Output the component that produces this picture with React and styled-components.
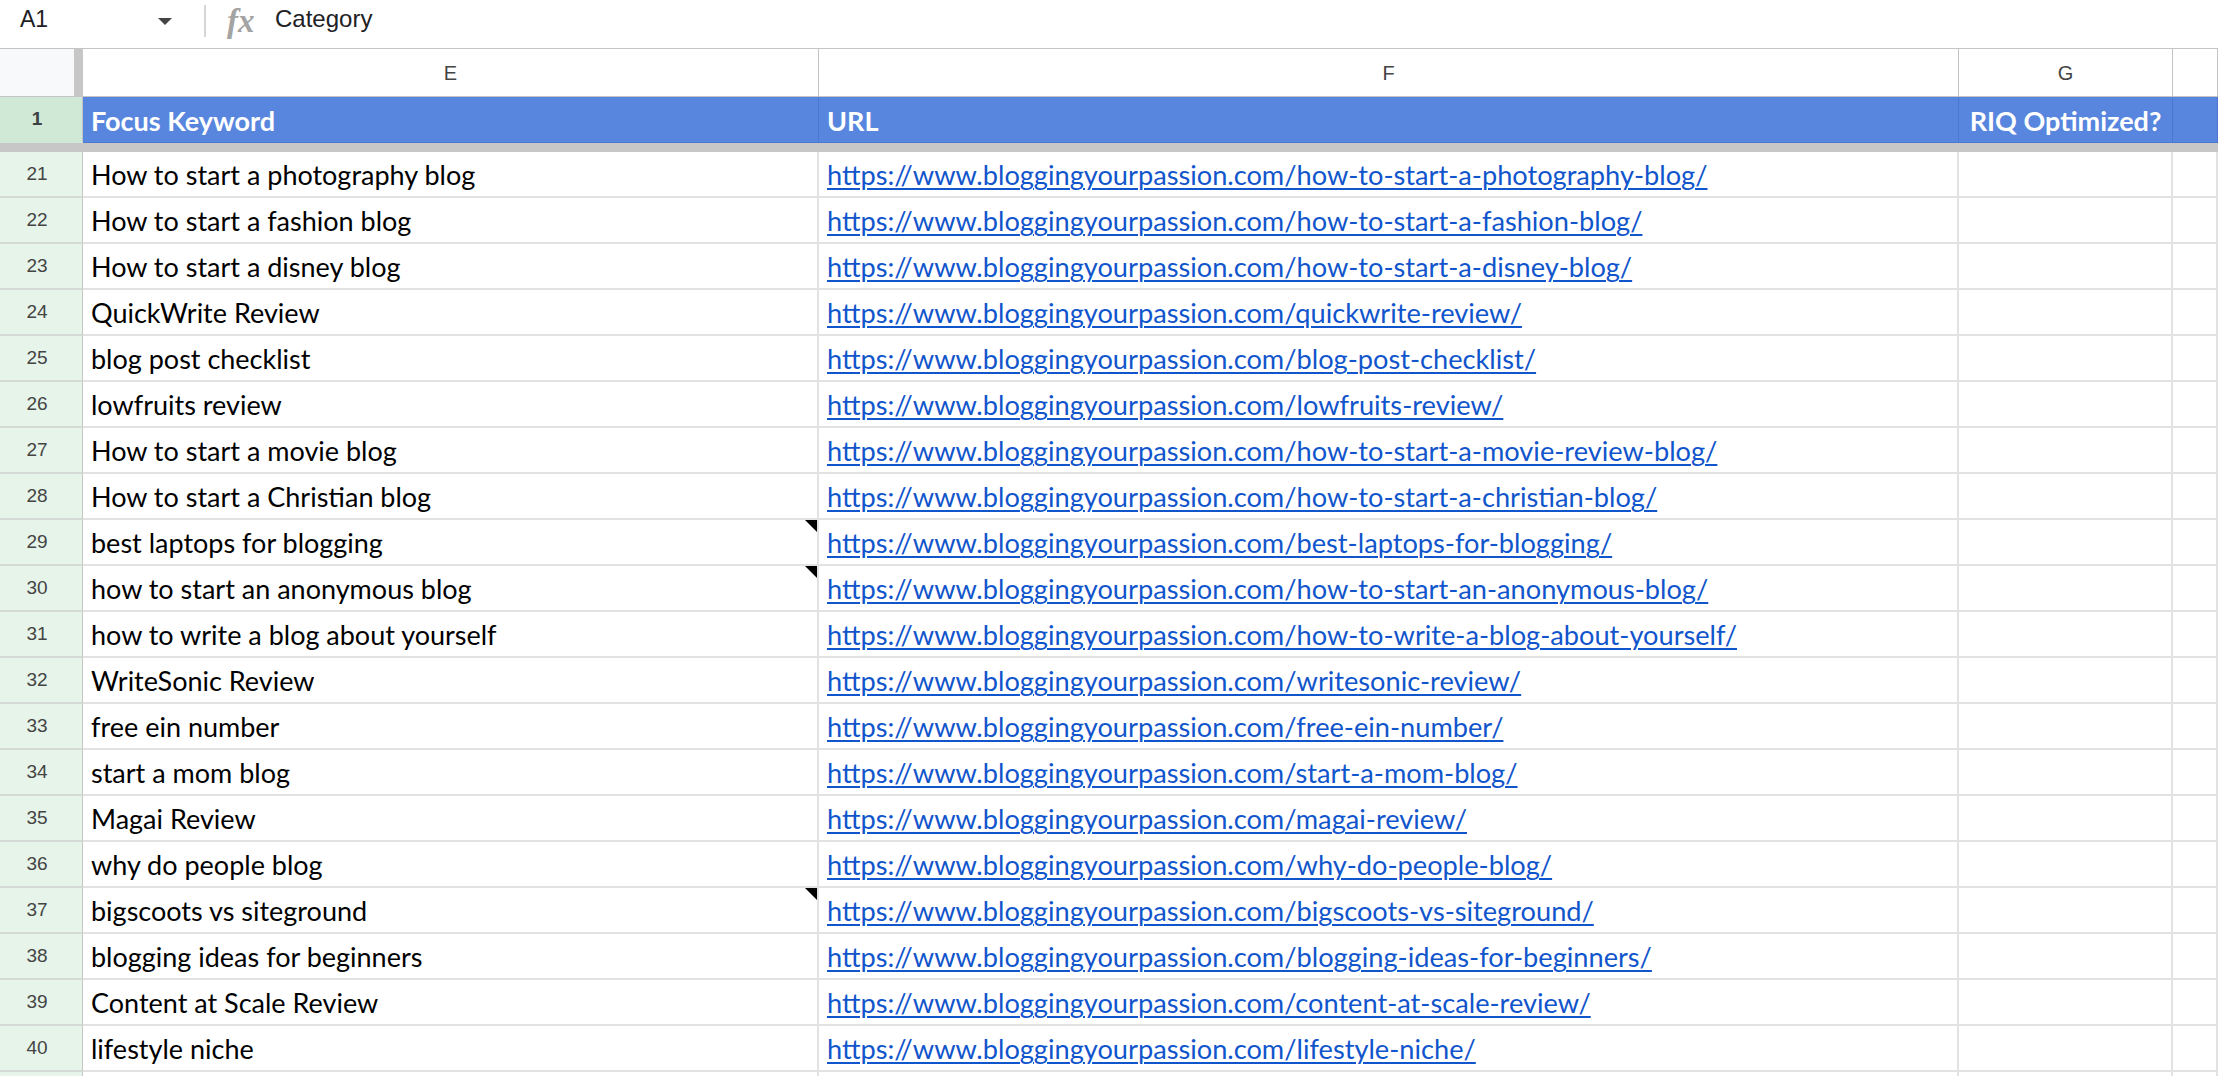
import React from 'react';
import styled, { createGlobalStyle } from 'styled-components';

const GlobalStyle = createGlobalStyle`
  html, body {
    margin: 0;
    padding: 0;
    background: #ffffff;
    overflow: hidden;
  }
  body {
    font-family: 'Liberation Sans', Arial, sans-serif;
  }
`;

const BASE = 'https://www.bloggingyourpassion.com/';

const rows = [
  [21, 'How to start a photography blog', 'how-to-start-a-photography-blog/'],
  [22, 'How to start a fashion blog', 'how-to-start-a-fashion-blog/'],
  [23, 'How to start a disney blog', 'how-to-start-a-disney-blog/'],
  [24, 'QuickWrite Review', 'quickwrite-review/'],
  [25, 'blog post checklist', 'blog-post-checklist/'],
  [26, 'lowfruits review', 'lowfruits-review/'],
  [27, 'How to start a movie blog', 'how-to-start-a-movie-review-blog/'],
  [28, 'How to start a Christian blog', 'how-to-start-a-christian-blog/'],
  [29, 'best laptops for blogging', 'best-laptops-for-blogging/', true],
  [30, 'how to start an anonymous blog', 'how-to-start-an-anonymous-blog/', true],
  [31, 'how to write a blog about yourself', 'how-to-write-a-blog-about-yourself/'],
  [32, 'WriteSonic Review', 'writesonic-review/'],
  [33, 'free ein number', 'free-ein-number/'],
  [34, 'start a mom blog', 'start-a-mom-blog/'],
  [35, 'Magai Review', 'magai-review/'],
  [36, 'why do people blog', 'why-do-people-blog/'],
  [37, 'bigscoots vs siteground', 'bigscoots-vs-siteground/', true],
  [38, 'blogging ideas for beginners', 'blogging-ideas-for-beginners/'],
  [39, 'Content at Scale Review', 'content-at-scale-review/'],
  [40, 'lifestyle niche', 'lifestyle-niche/'],
  [41, '', ''],
];

const COLS = '83px 736px 1140px 214px 1fr';
const CELL_FONT = "'Lato', 'Open Sans', sans-serif";

const Page = styled.div`
  width: 2218px;
  height: 1076px;
  overflow: hidden;
  display: flex;
  flex-direction: column;
`;

const FormulaBar = styled.div`
  height: 49px;
  flex: none;
  box-sizing: border-box;
  display: flex;
  align-items: center;
  padding-bottom: 10px;
  border-bottom: 1px solid #c4c4c4;
  font-size: 24px;
  color: #202124;
`;

const NameBox = styled.div`
  width: 184px;
  padding: 0 12px 0 20px;
  box-sizing: border-box;
  display: flex;
  align-items: center;
  justify-content: space-between;
  font-size: 23px;
`;

const Caret = styled.span`
  width: 0;
  height: 0;
  margin-top: 4px;
  border-left: 7px solid transparent;
  border-right: 7px solid transparent;
  border-top: 7px solid #444;
`;

const Divider = styled.span`
  width: 2px;
  height: 32px;
  margin-top: 4px;
  background: #d5d5d5;
  margin-left: 20px;
`;

const Fx = styled.span`
  font-family: 'Liberation Serif', serif;
  font-style: italic;
  font-weight: 700;
  font-size: 33px;
  color: #a3a3a3;
  margin-left: 21px;
  margin-top: 4px;
  width: 48px;
`;

const GridRow = styled.div`
  display: grid;
  grid-template-columns: ${COLS};
  flex: none;
  height: ${(p) => p.$h}px;
`;

const Corner = styled.div`
  background: #f8f9fa;
  border-right: 9px solid #c7c7c7;
  border-bottom: 1px solid #c4c4c4;
  box-sizing: border-box;
`;

const ColLetter = styled.div`
  display: flex;
  align-items: center;
  justify-content: center;
  border-right: 1px solid #c4c4c4;
  border-bottom: 1px solid #c4c4c4;
  font-size: 20px;
  color: #444;
  padding-top: 2px;
  box-sizing: border-box;
`;

const RowNum = styled.div`
  background: ${(p) => (p.$head ? '#cfe9d6' : '#e7f4ea')};
  border-right: 1px solid #c4c4c4;
  border-bottom: 2px solid ${(p) => (p.$head ? '#cfe9d6' : '#d4d9d5')};
  box-sizing: border-box;
  display: flex;
  align-items: center;
  padding-right: 8px;
  justify-content: center;
  font-size: 19px;
  color: ${(p) => (p.$head ? '#3c4043' : '#444')};
  font-weight: ${(p) => (p.$head ? 700 : 400)};
`;

const HeadCell = styled.div`
  background: #5886de;
  border-right: 1px solid #4b77cc;
  border-bottom: 1px solid #4b77cc;
  box-sizing: border-box;
  color: #fff;
  font-family: ${CELL_FONT};
  font-weight: 700;
  font-size: 27px;
  line-height: 32px;
  display: flex;
  align-items: flex-end;
  justify-content: ${(p) => (p.$center ? 'center' : 'flex-start')};
  padding: 0 8px 5px;
  white-space: nowrap;
`;

const FreezeBar = styled.div`
  height: 9px;
  flex: none;
  background: #c7c7c7;
`;

const Cell = styled.div`
  position: relative;
  border-right: 2px solid #e2e2e2;
  border-bottom: 2px solid #e2e2e2;
  box-sizing: border-box;
  font-family: ${CELL_FONT};
  font-size: 27px;
  line-height: 32px;
  color: #000;
  display: flex;
  align-items: flex-end;
  padding: 0 8px 5px;
  white-space: nowrap;
`;

const Link = styled.a`
  color: #1155cc;
  font-size: 27.2px;
  text-decoration: underline;
  text-decoration-thickness: 2px;
  text-underline-offset: 3px;
`;

const NoteMark = styled.span`
  position: absolute;
  top: 0;
  right: 0;
  width: 0;
  height: 0;
  border-top: 12px solid #000;
  border-left: 12px solid transparent;
`;

export default function App() {
  return (
    <Page>
      <GlobalStyle />
      <FormulaBar>
        <NameBox>
          <span>A1</span>
          <Caret />
        </NameBox>
        <Divider />
        <Fx>fx</Fx>
        <span>Category</span>
      </FormulaBar>
      <GridRow $h={48}>
        <Corner />
        <ColLetter>E</ColLetter>
        <ColLetter>F</ColLetter>
        <ColLetter>G</ColLetter>
        <ColLetter />
      </GridRow>
      <GridRow $h={46}>
        <RowNum $head>1</RowNum>
        <HeadCell>Focus Keyword</HeadCell>
        <HeadCell>URL</HeadCell>
        <HeadCell $center>RIQ Optimized?</HeadCell>
        <HeadCell />
      </GridRow>
      <FreezeBar />
      {rows.map(([n, kw, slug, note]) => (
        <GridRow $h={46} key={n}>
          <RowNum>{n}</RowNum>
          <Cell>
            {kw}
            {note && <NoteMark />}
          </Cell>
          <Cell>{slug && <Link href={BASE + slug}>{BASE + slug}</Link>}</Cell>
          <Cell />
          <Cell />
        </GridRow>
      ))}
    </Page>
  );
}
